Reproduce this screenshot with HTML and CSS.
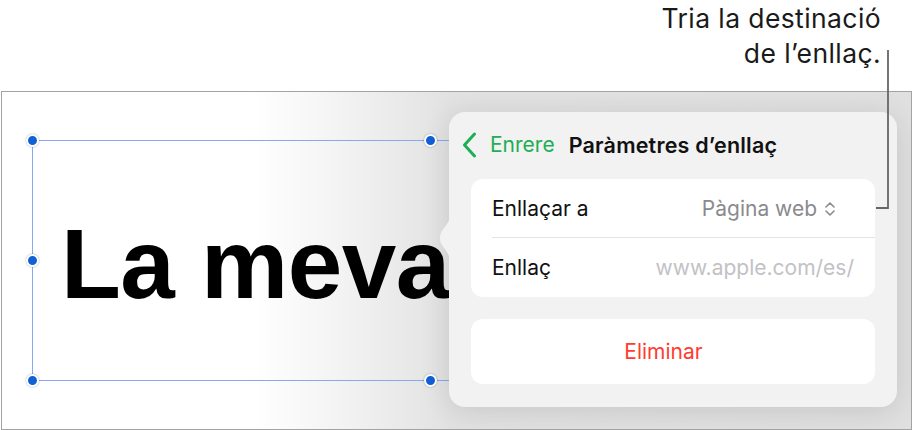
FILE: index.html
```html
<!DOCTYPE html>
<html lang="ca">
<head>
<meta charset="utf-8">
<title>Paràmetres d'enllaç</title>
<link rel="stylesheet" href="styles.css">
</head>
<body>
<div class="page">
  <div class="annotation">Tria la destinació<br>de l’enllaç.</div>
  <div class="canvas">
    <div class="selection">
      <div class="big-text">La meva</div>
      <span class="handle h-tl"></span>
      <span class="handle h-tr"></span>
      <span class="handle h-ml"></span>
      <span class="handle h-bl"></span>
      <span class="handle h-br"></span>
    </div>
    <div class="popover">
      <svg class="pop-arrow" width="12" height="52" viewBox="0 0 12 52"><path d="M11 0 C11 8 9 11 5 16 C2 20 1 22 1 26 C1 30 2 32 5 36 C9 41 11 44 11 52 Z" fill="#f2f2f2"/></svg>
      <div class="pop-header">
        <svg class="back-chev" width="15" height="26" viewBox="0 0 15 26"><path d="M12.5 2 L2.5 13 L12.5 24" fill="none" stroke="#1fae55" stroke-width="3" stroke-linecap="round" stroke-linejoin="round"/></svg>
        <span class="back-label">Enrere</span>
        <span class="pop-title">Paràmetres d’enllaç</span>
      </div>
      <div class="group">
        <div class="row">
          <span class="row-label">Enllaçar a</span>
          <span class="row-value">Pàgina web
            <svg class="updown" width="12" height="16" viewBox="0 0 12 16"><path d="M2 6 L6 2 L10 6 M2 10 L6 14 L10 10" fill="none" stroke="#8a8a8e" stroke-width="1.6" stroke-linecap="round" stroke-linejoin="round"/></svg>
          </span>
        </div>
        <div class="row row-sep">
          <span class="row-label">Enllaç</span>
          <span class="row-placeholder">www.apple.com/es/</span>
        </div>
      </div>
      <div class="group">
        <div class="row row-action">Eliminar</div>
      </div>
    </div>
  </div>
  <svg class="callout" width="913" height="430" viewBox="0 0 913 430"><path d="M888 50 V208 H876" fill="none" stroke="#666666" stroke-width="1.8"/></svg>
</div>
</body>
</html>
```
FILE: styles.css
```css
* { box-sizing: border-box; }
html, body { margin: 0; padding: 0; background: #fff; }
body { font-family: "Inter", "Roboto", "Liberation Sans", sans-serif; color: #111; }

.page {
  position: relative;
  width: 913px;
  height: 430px;
  overflow: hidden;
}

.annotation {
  height: 91px;
  padding: 1px 32px 0 0;
  text-align: right;
  font-size: 26.5px;
  line-height: 35px;
  color: #1a1a1a;
  letter-spacing: 0.4px;
}

.canvas {
  position: relative;
  margin-left: 1px;
  width: 911px;
  height: 339px;
  border: 1px solid #a3a3a3;
  background: linear-gradient(to right, #ffffff 0, #ffffff 250px, #f3f3f3 340px, #e2e2e2 447px, #e0e0e0 100%);
  overflow: hidden;
}

.selection {
  position: absolute;
  left: 30px;
  top: 48px;
  width: 520px;
  height: 241px;
  border: 1px solid #86a9ef;
  border-right: none;
  padding: 74px 0 0 28px;
}

.big-text {
  font-family: "Liberation Sans", Arial, sans-serif;
  font-weight: 700;
  font-size: 98px;
  line-height: 98px;
  color: #000;
  letter-spacing: -0.5px;
  white-space: nowrap;
}

.handle {
  position: absolute;
  width: 13px;
  height: 13px;
  border-radius: 50%;
  background: #1160d6;
  border: 2px solid #fff;
  box-shadow: 0 0 2px rgba(0,0,0,0.35);
}
.h-tl { left: -7px; top: -7px; }
.h-tr { left: 391px; top: -7px; }
.h-ml { left: -7px; top: 113px; }
.h-bl { left: -7px; top: 233px; }
.h-br { left: 391px; top: 233px; }

.popover {
  position: absolute;
  left: 447px;
  top: 20px;
  width: 448px;
  height: 295px;
  background: #f2f2f2;
  border-radius: 16px;
  box-shadow: 0 4px 30px rgba(0,0,0,0.12);
  padding: 0 22px;
}

.pop-arrow {
  position: absolute;
  left: -10px;
  top: 100px;
}

.pop-header {
  height: 67px;
  display: flex;
  align-items: center;
  padding-bottom: 2px;
  margin-left: -9px;
}
.back-chev { margin-right: 13px; }
.back-label {
  color: #1fae55;
  font-size: 21px;
  margin-right: 14px;
}
.pop-title {
  font-size: 21.5px;
  font-weight: 600;
  color: #111;
  letter-spacing: 0.2px;
}

.group {
  background: #fff;
  border-radius: 12px;
  margin-bottom: 22px;
}

.row {
  height: 59px;
  display: flex;
  align-items: center;
  justify-content: space-between;
  padding: 0 21px;
  font-size: 21px;
}
.row-sep { position: relative; }
.row-sep::before {
  content: "";
  position: absolute;
  left: 21px;
  right: 0;
  top: -1px;
  height: 1px;
  background: #e4e4e6;
}
.row-label { color: #111; }
.row-value {
  display: flex;
  align-items: center;
  gap: 7px;
  color: #8a8a8e;
  margin-right: 18px;
}
.row-placeholder { color: #c2c2c6; }

.row-action {
  height: 65px;
  justify-content: center;
  color: #ff3b30;
  padding-right: 40px;
}

.callout {
  position: absolute;
  left: 0;
  top: 0;
  pointer-events: none;
}
```
